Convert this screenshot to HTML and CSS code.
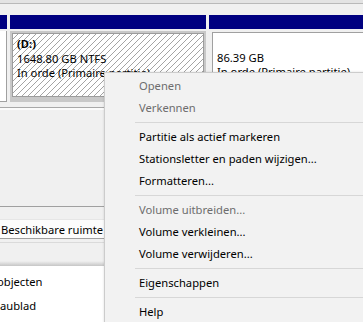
FILE: index.html
```html
<!DOCTYPE html>
<html lang="nl">
<head>
    <meta charset="UTF-8">
    <meta name="viewport" content="width=device-width, initial-scale=1.0">
    <title>Schijfbeheer</title>
    <link rel="stylesheet" href="styles.css">
</head>
<body>
    <div class="screen">
        <div class="top-edge"></div>

        <div class="disk">
            <div class="part part-small">
                <div class="part-head"></div>
                <div class="box-small"></div>
            </div>
            <div class="part part-d">
                <div class="part-head"></div>
                <div class="frame">
                    <div class="box hatched">
                        <div class="line"><b>(D:)</b></div>
                        <div class="line">1648.80 GB NTFS</div>
                        <div class="line">In orde (Primaire partitie)</div>
                    </div>
                </div>
            </div>
            <div class="part part-right">
                <div class="part-head"></div>
                <div class="box plain">
                    <div class="line">&nbsp;</div>
                    <div class="line">86.39 GB</div>
                    <div class="line">In orde (Primaire partitie)</div>
                </div>
            </div>
        </div>

        <div class="pane-rule"></div>
        <div class="pane-empty"></div>

        <div class="legend">
            <div class="legend-row">Beschikbare ruimte</div>
        </div>
        <div class="legend-foot"></div>

        <div class="below">
            <div class="below-item shifted">objecten</div>
            <div class="below-item">aublad</div>
        </div>

        <ul class="context-menu">
            <li class="disabled">Openen</li>
            <li class="disabled">Verkennen</li>
            <li class="sep"></li>
            <li>Partitie als actief markeren</li>
            <li>Stationsletter en paden wijzigen...</li>
            <li>Formatteren...</li>
            <li class="sep"></li>
            <li class="disabled">Volume uitbreiden...</li>
            <li>Volume verkleinen...</li>
            <li>Volume verwijderen...</li>
            <li class="sep"></li>
            <li>Eigenschappen</li>
            <li class="sep"></li>
            <li>Help</li>
        </ul>
    </div>
</body>
</html>
```

FILE: styles.css
```css
body {
    margin: 0;
    background-color: #f0f0f0;
    font-family: "Noto Sans", "Open Sans", sans-serif;
    font-size: 11.2px;
    color: #000;
    overflow: hidden;
}
.screen {
    position: relative;
    width: 363px;
    height: 322px;
    overflow: hidden;
}
.top-edge {
    height: 12px;
    border-top: 3px solid #e3e3e3;
    box-shadow: inset 0 1px 0 #b9b9b9;
    background-color: #f0f0f0;
}
.disk {
    display: flex;
    gap: 3px;
    height: 88px;
    background-color: #f0f0f0;
}
.part {
    display: flex;
    flex-direction: column;
}
.part-head {
    height: 14px;
    background-color: #000080;
}
.part-small {
    width: 7px;
}
.box-small {
    height: 70px;
    margin-top: 2px;
    background-color: #fff;
    border-right: 1px solid #a0a0a0;
    border-bottom: 1px solid #a0a0a0;
}
.part-d {
    width: 196px;
}
.frame {
    margin-top: 2px;
    padding: 2px 2px 5px 2px;
    background-color: #c8c8c8;
}
.box {
    height: 59px;
    padding: 3px 4px 0 4px;
    border: 1px solid #9c9c9c;
    line-height: 14.5px;
    white-space: nowrap;
}
.hatched {
    background: repeating-linear-gradient(135deg, #ffffff 0 3.2px, #a4a4a4 3.2px 4.24px);
}
.part-right {
    flex: 1;
}
.plain {
    margin: 3px 0 0 3px;
    height: 60px;
    background-color: #fff;
    border-color: #a0a0a0;
    border-right: none;
}
.pane-rule {
    height: 2px;
    margin-top: 4px;
    border-top: 1px solid #a8a8a8;
    background-color: #fbfbfb;
}
.pane-empty {
    height: 96px;
}
.legend {
    border-top: 1px solid #a0a0a0;
    padding-top: 12px;
}
.legend-row {
    height: 18px;
    line-height: 19px;
    padding-left: 1px;
    border-top: 1px solid #e6e6e6;
    border-bottom: 1px solid #a0a0a0;
    background-color: #fcfcfc;
}
.legend-foot {
    height: 23px;
    margin-top: 3px;
    border-top: 1px solid #dadada;
    background: linear-gradient(to bottom, #f0f0f0 0, #f0f0f0 18px, #c6c6c6 23px);
}
.below {
    height: 60px;
    padding-top: 4px;
    background-color: #fff;
}
.below-item {
    height: 24px;
    line-height: 24px;
}
.shifted {
    margin-left: -3px;
}
.context-menu {
    position: absolute;
    left: 104px;
    top: 72px;
    width: 270px;
    height: 260px;
    margin: 0;
    padding: 2px 0 0 0;
    list-style: none;
    background-color: #f2f2f2;
    border: 1px solid #cccccc;
    box-shadow: 1px 1px 3px rgba(0, 0, 0, 0.25);
}
.context-menu li {
    height: 22px;
    line-height: 22px;
    padding-left: 34px;
    white-space: nowrap;
}
.context-menu li.disabled {
    color: #6d6d6d;
}
.context-menu li.sep {
    height: 0;
    margin: 3px 0 3px 30px;
    padding: 0;
    border-top: 1px solid #d7d7d7;
}
```
